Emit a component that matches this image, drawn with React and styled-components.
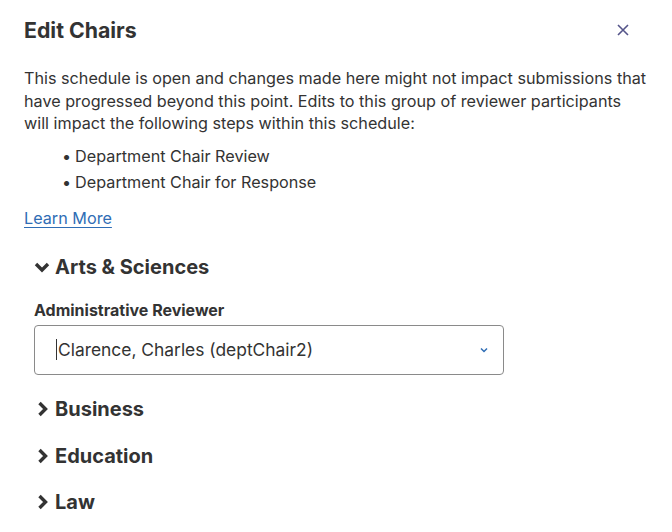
import React from "react";
import styled, { createGlobalStyle } from "styled-components";

const Global = createGlobalStyle`
  html, body { margin: 0; padding: 0; background: #fff; }
  body { font-family: Inter, "Noto Sans", sans-serif; color: #333; }
`;

const Dialog = styled.div`
  width: 672px;
  height: 532px;
  box-sizing: border-box;
  padding: 15px 24px 0 24px;
  overflow: hidden;
`;

const Header = styled.div`
  display: flex;
  align-items: center;
  justify-content: space-between;
  height: 30px;
`;

const Title = styled.h2`
  margin: 0;
  font-size: 21.3px;
  font-weight: 700;
  color: #333;
`;

const CloseButton = styled.button`
  border: 0;
  background: none;
  padding: 0;
  width: 24px;
  height: 24px;
  margin-right: 13px;
  display: flex;
  align-items: center;
  justify-content: center;
  color: #55558a;
  cursor: pointer;
`;

const Paragraph = styled.p`
  margin: 22px 0 0 0;
  font-size: 16.2px;
  line-height: 22.5px;
  color: #333;
`;

const Steps = styled.ul`
  margin: 8px 0 0 0;
  padding: 0 0 0 38px;
  list-style: none;
`;

const Step = styled.li`
  font-size: 16.2px;
  line-height: 26px;
  color: #333;
  &::before {
    content: "•";
    margin-right: 4px;
  }
`;

const LearnMore = styled.a`
  display: inline-block;
  margin-top: 12px;
  font-size: 16.2px;
  line-height: 22px;
  color: #2f6db5;
  text-decoration: underline;
  text-underline-offset: 3px;
`;

const Sections = styled.div`
  padding-left: 10px;
  margin-top: 23px;
`;

const SectionHeader = styled.div`
  display: flex;
  align-items: center;
  gap: 5px;
  height: 30px;
  font-size: 20px;
  font-weight: 700;
  color: #333;
  margin-bottom: ${(p) => p.$gap}px;
`;

const Chevron = styled.svg`
  width: 16px;
  height: 16px;
  flex: none;
`;

const Field = styled.div`
  margin-bottom: 19px;
`;

const Label = styled.div`
  font-size: 16px;
  font-weight: 700;
  line-height: 20px;
  color: #333;
  margin-bottom: 5px;
`;

const Select = styled.div`
  width: 470px;
  height: 50px;
  box-sizing: border-box;
  border: 1px solid #8a8a8a;
  border-radius: 4px;
  display: flex;
  align-items: center;
  justify-content: space-between;
  padding: 0 14px 0 21px;
  font-size: 17.4px;
  color: #333;
`;

const Value = styled.span`
  border-left: 1px solid #333;
  padding-left: 1px;
  line-height: 21px;
`;

const Caret = styled.svg`
  width: 10px;
  height: 10px;
  color: #2f6db5;
`;

const ChevronDown = () => (
  <Chevron viewBox="0 0 16 16">
    <path d="M2 5 L8 11 L14 5" fill="none" stroke="#333" strokeWidth="3.4" />
  </Chevron>
);

const ChevronRight = () => (
  <Chevron viewBox="0 0 16 16">
    <path d="M5.5 2 L11.5 8 L5.5 14" fill="none" stroke="#333" strokeWidth="3.4" />
  </Chevron>
);

export default function App() {
  return (
    <>
      <Global />
      <Dialog>
        <Header>
          <Title>Edit Chairs</Title>
          <CloseButton aria-label="Close">
            <svg width="12" height="12" viewBox="0 0 12 12">
              <path d="M1 1 L11 11 M11 1 L1 11" stroke="currentColor" strokeWidth="1.6" />
            </svg>
          </CloseButton>
        </Header>
        <Paragraph>
          This schedule is open and changes made here might not impact submissions that have progressed beyond this point. Edits to this group of reviewer participants will impact the following steps within this schedule:
        </Paragraph>
        <Steps>
          <Step>Department Chair Review</Step>
          <Step>Department Chair for Response</Step>
        </Steps>
        <LearnMore href="#">Learn More</LearnMore>
        <Sections>
          <SectionHeader $gap={18}>
            <ChevronDown />
            Arts &amp; Sciences
          </SectionHeader>
          <Field>
            <Label>Administrative Reviewer</Label>
            <Select>
              <Value>Clarence, Charles (deptChair2)</Value>
              <Caret viewBox="0 0 10 10">
                <path d="M2 3.5 L5 6.5 L8 3.5" fill="none" stroke="currentColor" strokeWidth="1.5" />
              </Caret>
            </Select>
          </Field>
          <SectionHeader $gap={17}>
            <ChevronRight />
            Business
          </SectionHeader>
          <SectionHeader $gap={16}>
            <ChevronRight />
            Education
          </SectionHeader>
          <SectionHeader $gap={0}>
            <ChevronRight />
            Law
          </SectionHeader>
        </Sections>
      </Dialog>
    </>
  );
}
